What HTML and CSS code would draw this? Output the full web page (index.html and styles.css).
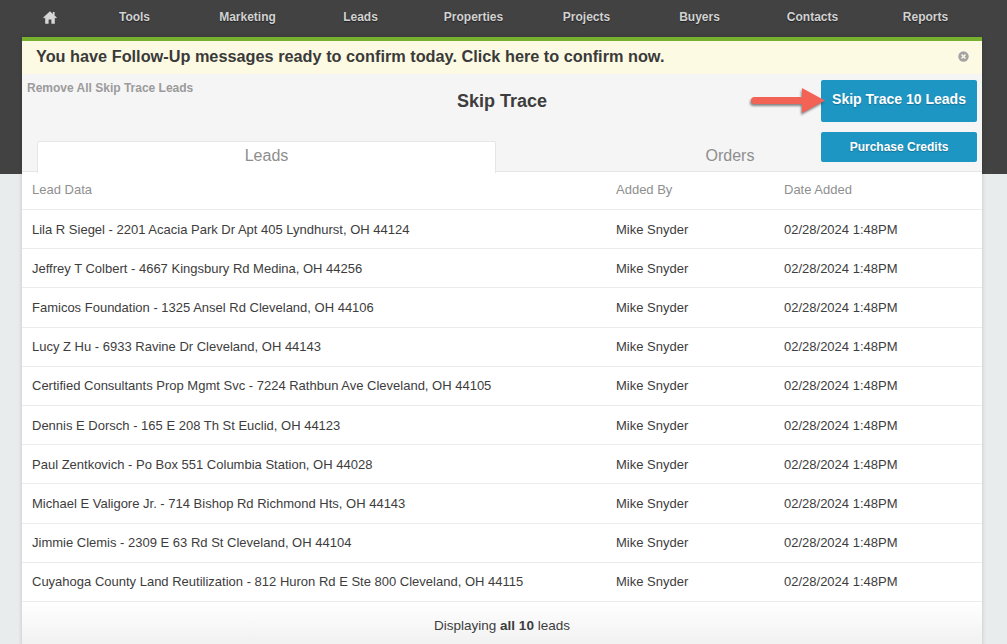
FILE: index.html
```html
<!DOCTYPE html>
<html lang="en">
<head>
<meta charset="utf-8">
<title>Skip Trace</title>
<link rel="stylesheet" href="styles.css">
</head>
<body>
<div class="backdrop"></div>
<nav class="nav">
  <a class="nav-home" aria-label="Home"><svg width="14" height="13" viewBox="0 0 14 13"><path d="M7 0.3 0.2 6.6 1 7.4 2.2 6.4V12.8H5.6V8.6H8.4V12.8H11.8V6.4L13 7.4 13.8 6.6 11.6 4.6V1H9.8V2.9Z" fill="#d6d6d6"/></svg></a>
  <a class="nav-item">Tools</a>
  <a class="nav-item">Marketing</a>
  <a class="nav-item">Leads</a>
  <a class="nav-item">Properties</a>
  <a class="nav-item">Projects</a>
  <a class="nav-item">Buyers</a>
  <a class="nav-item">Contacts</a>
  <a class="nav-item">Reports</a>
</nav>
<main class="panel">
  <div class="notice">
    <span>You have Follow-Up messages ready to confirm today. Click here to confirm now.</span>
    <svg class="notice-close" width="11" height="11" viewBox="0 0 11 11"><circle cx="5.5" cy="5.5" r="5.2" fill="#a3a3a3"/><path d="M3.5 3.5 7.5 7.5M7.5 3.5 3.5 7.5" stroke="#fdf9e3" stroke-width="1.5"/></svg>
  </div>
  <header class="head">
    <div class="head-top">
      <a class="remove">Remove All Skip Trace Leads</a>
      <h1 class="title">Skip Trace</h1>
    </div>
    <div class="tabs">
      <a class="tab tab-active">Leads</a>
      <a class="tab">Orders</a>
    </div>
    <div class="actions">
      <div class="action-main">
        <svg class="arrow" width="78" height="36" viewBox="0 0 78 36">
          <defs><filter id="arrow-blur" x="-10%" y="-30%" width="120%" height="160%"><feGaussianBlur stdDeviation="1"/></filter></defs>
          <path class="arrow-shadow" d="M7.5 14H55V5L78 17.5 55 30V21H7.5A3.500 3.500 0 0 1 7.500 14Z" filter="url(#arrow-blur)" transform="translate(-1 2)"/>
          <path class="arrow-fill" d="M7.500 14H55V5L78 17.5 55 30V21H7.500A3.500 3.500 0 0 1 7.500 14Z"/>
        </svg>
        <a class="btn btn-large">Skip Trace 10 Leads</a>
      </div>
      <a class="btn btn-small">Purchase Credits</a>
    </div>
  </header>
  <div class="table">
    <div class="row row-head"><span>Lead Data</span><span>Added By</span><span>Date Added</span></div>
    <div class="row"><span>Lila R Siegel - 2201 Acacia Park Dr Apt 405 Lyndhurst, OH 44124</span><span>Mike Snyder</span><span>02/28/2024 1:48PM</span></div>
    <div class="row"><span>Jeffrey T Colbert - 4667 Kingsbury Rd Medina, OH 44256</span><span>Mike Snyder</span><span>02/28/2024 1:48PM</span></div>
    <div class="row"><span>Famicos Foundation - 1325 Ansel Rd Cleveland, OH 44106</span><span>Mike Snyder</span><span>02/28/2024 1:48PM</span></div>
    <div class="row"><span>Lucy Z Hu - 6933 Ravine Dr Cleveland, OH 44143</span><span>Mike Snyder</span><span>02/28/2024 1:48PM</span></div>
    <div class="row"><span>Certified Consultants Prop Mgmt Svc - 7224 Rathbun Ave Cleveland, OH 44105</span><span>Mike Snyder</span><span>02/28/2024 1:48PM</span></div>
    <div class="row"><span>Dennis E Dorsch - 165 E 208 Th St Euclid, OH 44123</span><span>Mike Snyder</span><span>02/28/2024 1:48PM</span></div>
    <div class="row"><span>Paul Zentkovich - Po Box 551 Columbia Station, OH 44028</span><span>Mike Snyder</span><span>02/28/2024 1:48PM</span></div>
    <div class="row"><span>Michael E Valigore Jr. - 714 Bishop Rd Richmond Hts, OH 44143</span><span>Mike Snyder</span><span>02/28/2024 1:48PM</span></div>
    <div class="row"><span>Jimmie Clemis - 2309 E 63 Rd St Cleveland, OH 44104</span><span>Mike Snyder</span><span>02/28/2024 1:48PM</span></div>
    <div class="row"><span>Cuyahoga County Land Reutilization - 812 Huron Rd E Ste 800 Cleveland, OH 44115</span><span>Mike Snyder</span><span>02/28/2024 1:48PM</span></div>
  </div>
  <footer class="foot">Displaying <b>all 10</b> leads</footer>
</main>
</body>
</html>
```
FILE: styles.css
```css
* { box-sizing: border-box; }
html, body { height: 100%; }
body {
  margin: 0;
  height: 644px;
  overflow: hidden;
  position: relative;
  background: #e8ecec;
  font-family: "Liberation Sans", Arial, sans-serif;
  color: #3d3d3d;
}
.backdrop {
  position: absolute;
  inset: 0 0 auto 0;
  height: 174px;
  background: #424242;
}
.nav {
  position: relative;
  display: flex;
  height: 37px;
  padding: 0 0 3px 22px;
  align-items: center;
}
.nav-home { width: 56px; display: flex; justify-content: center; }
.nav-item {
  width: 113px;
  text-align: center;
  font-size: 12px;
  font-weight: bold;
  color: #d2d2d2;
  text-shadow: 0 1px 1px #222;
}
.panel {
  position: relative;
  width: 960px;
  margin-left: 22px;
  background: #fff;
  box-shadow: 0 0 4px rgba(0,0,0,.18);
}
.notice {
  display: flex;
  justify-content: space-between;
  align-items: center;
  height: 37px;
  padding: 0 13px 2px 14px;
  border-top: 4px solid #76b02e;
  background: #fdfae3;
  font-size: 16.3px;
  font-weight: bold;
  color: #3a3a3a;
}
.head {
  display: grid;
  grid-template-columns: 1fr;
  grid-template-rows: 67px 31px;
  height: 98px;
  background: #f5f5f5;
  border-bottom: 1px solid #e6e6e6;
}
.head-top { position: relative; grid-row: 1; grid-column: 1; text-align: center; }
.remove {
  position: absolute;
  left: 5px;
  top: 7px;
  font-size: 12px;
  font-weight: bold;
  color: #9b9b9b;
}
.title {
  margin: 16px 0 0;
  font-size: 18px;
  line-height: 22px;
  font-weight: bold;
  color: #3d3d3d;
}
.tabs {
  grid-row: 2;
  grid-column: 1;
  display: flex;
  padding-left: 15px;
}
.tab {
  width: 468px;
  text-align: center;
  font-size: 16px;
  line-height: 30px;
  color: #8e8e8e;
}
.tab-active {
  width: 459px;
  height: 32px;
  line-height: 28px;
  background: #fff;
  border: 1px solid #e6e6e6;
  border-bottom: 0;
  border-radius: 2px 2px 0 0;
}
.actions {
  grid-row: 1 / 3;
  grid-column: 1;
  justify-self: end;
  display: flex;
  flex-direction: column;
  align-items: flex-end;
  gap: 10px;
  padding: 6px 5px 0 0;
}
.action-main { display: flex; align-items: center; }
.arrow { margin-right: -4px; position: relative; z-index: 1; }
.arrow-fill { fill: #f26355; }
.arrow-shadow { fill: #3a3a3a; opacity: .6; }
.btn {
  display: flex;
  align-items: center;
  justify-content: center;
  width: 156px;
  background: #1d96c4;
  border-radius: 2px;
  color: #fff;
  font-weight: bold;
  text-shadow: 0 1px 1px rgba(0,0,0,.25);
}
.btn-large { height: 42px; font-size: 14px; padding-bottom: 4px; }
.btn-small { height: 30px; font-size: 12px; padding-bottom: 1px; }
.row {
  display: grid;
  grid-template-columns: 584px 168px 1fr;
  align-items: center;
  height: 39.2px;
  padding-left: 10px;
  font-size: 13px;
  color: #3d3d3d;
  border-bottom: 1px solid #ececec;
}
.row-head { height: 38px; padding-bottom: 2px; color: #8f8f8f; }
.foot {
  height: 46px;
  text-align: center;
  font-size: 13.5px;
  line-height: 48px;
  color: #3d3d3d;
  background: linear-gradient(#fff, #f0f0f0);
}
.foot b { font-weight: bold; }
```
